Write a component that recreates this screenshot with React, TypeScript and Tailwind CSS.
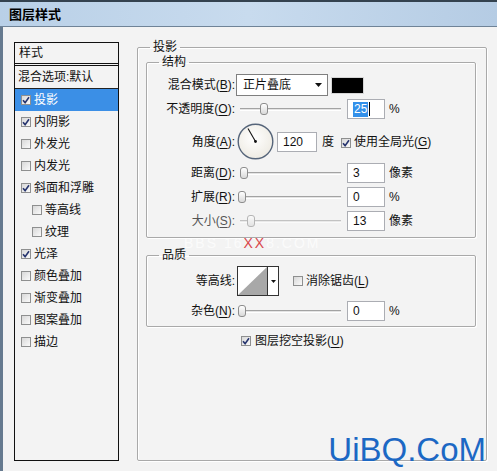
import type { ReactNode } from 'react';

const FONT = "font-['Liberation_Sans','Noto_Sans_CJK_SC',sans-serif]";

function Check({ on }: { on: boolean }) {
  return (
    <span className="inline-flex h-[10px] w-[10px] shrink-0 items-center justify-center border border-[#8e8f8f] bg-gradient-to-br from-[#d8d8d8] to-[#fafafa]">
      {on && (
        <svg viewBox="0 0 8 8" className="h-[8px] w-[8px]">
          <path d="M1 4.2 L3.1 6.6 L7 1.2" stroke="#26346e" strokeWidth="1.6" fill="none" />
        </svg>
      )}
    </span>
  );
}

function Slider({ pos, faint }: { pos: number; faint?: boolean }) {
  return (
    <div className={`relative flex h-[14px] w-[101px] items-center ${faint ? 'opacity-60' : ''}`}>
      <div className="h-[3px] w-full border-t border-b border-t-[#a3a3a3] border-b-white bg-[#e4e4e4]" />
      <span
        className="absolute top-[1px] h-[12px] w-[8px] rounded-[3px] border border-[#8d8d8d] bg-gradient-to-b from-white to-[#d9d9d9]"
        style={{ left: pos }}
      />
    </div>
  );
}

function Field({ children, w = 'w-[38px]' }: { children: ReactNode; w?: string }) {
  return (
    <div className={`flex h-[20px] ${w} items-center border border-[#abadb3] bg-white pl-[5px] text-[12px] leading-none text-[#111]`}>
      {children}
    </div>
  );
}

function Label({ text, k, faint }: { text: string; k?: string; faint?: boolean }) {
  return (
    <div className={`w-[88px] shrink-0 text-right text-[12px] leading-[16px] ${faint ? 'text-[#555]' : 'text-[#111]'}`}>
      {text}
      {k && (
        <>
          (<u className="underline-offset-2">{k}</u>)
        </>
      )}
      :
    </div>
  );
}

function SliderRow({
  text,
  k,
  pos,
  value,
  unit,
  faint,
}: {
  text: string;
  k: string;
  pos: number;
  value: string;
  unit: string;
  faint?: boolean;
}) {
  return (
    <div className="flex h-[20px] items-center">
      <Label text={text} k={k} faint={faint} />
      <div className="ml-[5px]">
        <Slider pos={pos} faint={faint} />
      </div>
      <div className="ml-[6px]">
        <Field>{value}</Field>
      </div>
      <span className="ml-[4px] text-[12px] leading-[16px] text-[#111]">{unit}</span>
    </div>
  );
}

const styles: { name: string; on: boolean; sub?: boolean; active?: boolean }[] = [
  { name: '投影', on: true, active: true },
  { name: '内阴影', on: true },
  { name: '外发光', on: false },
  { name: '内发光', on: false },
  { name: '斜面和浮雕', on: true },
  { name: '等高线', on: false, sub: true },
  { name: '纹理', on: false, sub: true },
  { name: '光泽', on: true },
  { name: '颜色叠加', on: false },
  { name: '渐变叠加', on: false },
  { name: '图案叠加', on: false },
  { name: '描边', on: false },
];

const groupBox =
  'rounded-[2px] border border-[#a9a9a9] shadow-[1px_1px_0_#ffffff,inset_1px_1px_0_#ffffff]';

export default function App() {
  return (
    <div className={`relative h-[471px] w-[497px] overflow-hidden bg-[#f3f3f3] ${FONT}`}>
      {/* title bar */}
      <div className="flex h-[27px] items-center border-t-2 border-b border-t-[#34424f] border-b-[#6f8397] bg-gradient-to-r from-[#b9d0e7] via-[#c8dbee] to-[#b5cce4] pl-[9px]">
        <span className="text-[13px] font-bold leading-none text-black">图层样式</span>
      </div>

      <div className="flex h-[444px] border-l-[3px] border-l-[#667a8f] pl-[11px] pt-[13px]">
        {/* style list */}
        <div className="mt-[2px] h-[419px] w-[105px] shrink-0 border border-[#111] bg-[#f3f3f3] text-[12px] text-[#111]">
          <div className="flex h-[23px] items-center border-b-[3px] border-double border-b-[#111] pl-[4px] leading-[16px]">样式</div>
          <div className="flex h-[23px] items-center border-b border-b-[#222] pl-[3px] leading-[16px]">混合选项:默认</div>
          {styles.map((s) => (
            <div
              key={s.name}
              className={`flex h-[22px] items-center gap-[3px] leading-[16px] ${s.sub ? 'pl-[17px]' : 'pl-[6px]'} ${
                s.active ? 'bg-[#3b8fe6] text-white' : ''
              }`}
            >
              <Check on={s.on} />
              <span>{s.name}</span>
            </div>
          ))}
        </div>

        {/* drop shadow panel */}
        <fieldset className={`ml-[18px] h-[421px] w-[350px] shrink-0 ${groupBox}`}>
          <legend className="ml-[12px] px-[3px] text-[12px] leading-[14px] text-[#111]">投影</legend>

          <fieldset className={`ml-[8px] w-[330px] pb-[6px] ${groupBox}`}>
            <legend className="ml-[12px] px-[3px] text-[12px] leading-[16px] text-[#111]">结构</legend>

            <div className="mt-[4px] flex h-[22px] items-center">
              <Label text="混合模式" k="B" />
              <div className="ml-[1px] flex h-[22px] w-[92px] items-center justify-between border border-[#7f7f7f] bg-white pl-[6px] pr-[5px] text-[12px] leading-[16px] text-[#111]">
                <span>正片叠底</span>
                <svg viewBox="0 0 7 4" className="h-[4px] w-[7px]">
                  <path d="M0 0 H7 L3.5 4 Z" fill="#111" />
                </svg>
              </div>
              <div className="ml-[3px] h-[17px] w-[33px] border border-[#d5d5d5] bg-black" />
            </div>

            <div className="mt-[3px]">
              <div className="flex h-[20px] items-center">
                <Label text="不透明度" k="O" />
                <div className="ml-[5px]">
                  <Slider pos={20} />
                </div>
                <div className="ml-[6px]">
                  <Field>
                    <span className="flex items-center bg-[#3390ea] px-[1px] leading-[15px] text-white">25</span>
                    <span className="ml-[1px] h-[14px] w-[1px] bg-black" />
                  </Field>
                </div>
                <span className="ml-[4px] text-[12px] leading-[16px] text-[#111]">%</span>
              </div>
            </div>

            <div className="mt-[4px] flex h-[37px] items-center">
              <Label text="角度" k="A" />
              <svg viewBox="0 0 37 37" className="ml-[2px] h-[37px] w-[37px]">
                <defs>
                  <radialGradient id="dial" cx="0.45" cy="0.4" r="0.6">
                    <stop offset="0" stopColor="#ffffff" />
                    <stop offset="1" stopColor="#eeebe3" />
                  </radialGradient>
                </defs>
                <circle cx="18.5" cy="18.5" r="17.3" fill="url(#dial)" stroke="#56657a" strokeWidth="1.4" />
                <line x1="18.5" y1="18.5" x2="11" y2="5.5" stroke="#111" strokeWidth="1.1" />
                <circle cx="18.5" cy="18.5" r="1.4" fill="#111" />
              </svg>
              <div className="ml-[3px]">
                <Field w="w-[40px]">120</Field>
              </div>
              <span className="ml-[5px] text-[12px] leading-[16px] text-[#111]">度</span>
              <span className="ml-[7px]">
                <Check on />
              </span>
              <span className="ml-[3px] text-[12px] leading-[16px] text-[#111]">
                使用全局光(<u className="underline-offset-2">G</u>)
              </span>
            </div>

            <div className="mt-[3px] flex flex-col gap-[4px]">
              <SliderRow text="距离" k="D" pos={0} value="3" unit="像素" />
              <SliderRow text="扩展" k="R" pos={-2} value="0" unit="%" />
              <SliderRow text="大小" k="S" pos={7} value="13" unit="像素" faint />
            </div>
          </fieldset>

          <fieldset className={`ml-[8px] mt-[9px] w-[330px] pb-[5px] ${groupBox}`}>
            <legend className="ml-[12px] px-[3px] text-[12px] leading-[16px] text-[#111]">品质</legend>

            <div className="mt-[3px] flex h-[30px] items-center">
              <Label text="等高线" />
              <div className="ml-[2px] flex h-[30px] w-[42px] border border-[#333] bg-white">
                <svg viewBox="0 0 29 28" className="h-[28px] w-[29px]">
                  <polygon points="0,28 29,0 29,28" fill="#a8a8a8" />
                </svg>
                <div className="flex flex-1 items-center justify-center border-l border-l-[#333]">
                  <svg viewBox="0 0 5 3" className="h-[3px] w-[5px]">
                    <path d="M0 0 H5 L2.5 3 Z" fill="#111" />
                  </svg>
                </div>
              </div>
              <span className="ml-[14px]">
                <Check on={false} />
              </span>
              <span className="ml-[3px] text-[12px] leading-[16px] text-[#111]">
                消除锯齿(<u className="underline-offset-2">L</u>)
              </span>
            </div>

            <div className="mt-[5px]">
              <SliderRow text="杂色" k="N" pos={-2} value="0" unit="%" />
            </div>
          </fieldset>

          <div className="ml-[103px] mt-[7px] flex h-[14px] items-center gap-[4px] text-[12px] leading-[16px] text-[#111]">
            <Check on />
            <span>
              图层挖空投影(<u className="underline-offset-2">U</u>)
            </span>
          </div>
        </fieldset>
      </div>

      {/* faint forum watermark */}
      <div className="pointer-events-none absolute left-[184px] top-[236px] text-[14px] leading-none tracking-[2px] text-white/70">
        BBS 16<span className="text-[#d9474c]">XX</span>8.COM
      </div>

      {/* site watermark */}
      <div className="pointer-events-none absolute bottom-[5px] right-[11px] text-[33px] leading-none text-[#1c68c4]">
        UiBQ.CoM
      </div>
    </div>
  );
}
